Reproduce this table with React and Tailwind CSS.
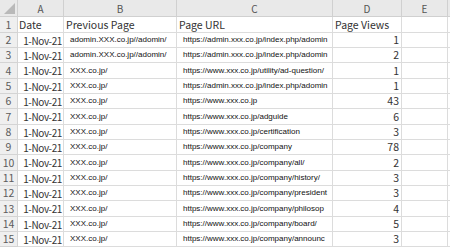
import React from 'react';

const ROWS = [
  ['Date', 'Previous Page', 'Page URL', 'Page Views', true],
  ['1-Nov-21', 'adomin.XXX.co.jp//adomin/', 'https://admin.xxx.co.jp/index.php/adomin', '1'],
  ['1-Nov-21', 'adomin.XXX.co.jp//adomin/', 'https://admin.xxx.co.jp/index.php/adomin', '2'],
  ['1-Nov-21', 'XXX.co.jp/', 'https://www.xxx.co.jp/utility/ad-question/', '1'],
  ['1-Nov-21', 'XXX.co.jp/', 'https://admin.xxx.co.jp/index.php/adomin', '1'],
  ['1-Nov-21', 'XXX.co.jp/', 'https://www.xxx.co.jp', '43'],
  ['1-Nov-21', 'XXX.co.jp/', 'https://www.xxx.co.jp/adguide', '6'],
  ['1-Nov-21', 'XXX.co.jp/', 'https://www.xxx.co.jp/certification', '3'],
  ['1-Nov-21', 'XXX.co.jp/', 'https://www.xxx.co.jp/company', '78'],
  ['1-Nov-21', 'XXX.co.jp/', 'https://www.xxx.co.jp/company/all/', '2'],
  ['1-Nov-21', 'XXX.co.jp/', 'https://www.xxx.co.jp/company/history/', '3'],
  ['1-Nov-21', 'XXX.co.jp/', 'https://www.xxx.co.jp/company/president', '3'],
  ['1-Nov-21', 'XXX.co.jp/', 'https://www.xxx.co.jp/company/philosop', '4'],
  ['1-Nov-21', 'XXX.co.jp/', 'https://www.xxx.co.jp/company/board/', '5'],
  ['1-Nov-21', 'XXX.co.jp/', 'https://www.xxx.co.jp/company/announc', '3'],
];

// rows alternate 15/16px so 15 rows land on the 246px line
const HEIGHTS = ['h-[15px]', 'h-[16px]', 'h-[15px]'];

const gothic = "font-['Noto_Sans_CJK_JP','Noto_Sans',sans-serif]";
const small = "font-['Liberation_Sans',Arial,sans-serif]";

function Row({ n, row }) {
  const [a, b, c, d, isHead] = row;
  const h = HEIGHTS[n % 3];
  return (
    <div className={`flex ${h} shrink-0 whitespace-nowrap`}>
      <div className={`w-[18px] shrink-0 flex items-center justify-center bg-[#efefef] border-r border-b border-[#d4d4d4] text-[10.5px] text-[#5c5c5c] ${gothic}`}>
        {n}
      </div>
      <div className={`w-[46px] shrink-0 flex items-center border-r border-b border-[#dcdcdc] text-[#333] ${gothic} ${isHead ? 'justify-start pl-[1px] text-[10.5px]' : 'justify-end pr-[1px] text-[10px] tracking-[-0.4px]'}`}>
        {a}
      </div>
      <div className={`w-[113px] shrink-0 flex items-center overflow-hidden border-r border-b border-[#dcdcdc] ${isHead ? `text-[10.5px] pl-[2px] text-[#333] ${gothic}` : `text-[8px] pl-[6px] text-[#111] ${small}`}`}>
        {b}
      </div>
      <div className={`w-[156px] shrink-0 flex items-center overflow-hidden border-r border-b border-[#dcdcdc] ${isHead ? `text-[10.5px] pl-[2px] text-[#333] ${gothic}` : `text-[8px] pl-[6px] text-[#111] ${small}`}`}>
        {c}
      </div>
      <div className={`w-[69px] shrink-0 flex items-center border-r border-b border-[#dcdcdc] text-[10.5px] text-[#333] ${gothic} ${isHead ? 'justify-start pl-[2px]' : 'justify-end pr-[2px]'}`}>
        {d}
      </div>
      <div className="w-[46px] shrink-0 border-r border-b border-[#dcdcdc]" />
      <div className="flex-1 border-b border-[#dcdcdc]" />
    </div>
  );
}

export default function App() {
  return (
    <div className="w-[450px] h-[249px] overflow-hidden bg-white flex flex-col">
      <div className={`flex h-[17px] shrink-0 bg-[#e9e9e9] text-[10px] text-[#555] ${gothic}`}>
        <div className="w-[18px] shrink-0 flex items-end justify-end border-r border-b border-[#d0d0d0] pr-[2px] pb-[2px]">
          <svg width="11" height="11" viewBox="0 0 11 11">
            <polygon points="11,0 11,11 0,11" fill="#b9b9b9" />
          </svg>
        </div>
        <div className="w-[46px] shrink-0 flex items-center justify-center border-r border-b border-[#d0d0d0]">A</div>
        <div className="w-[113px] shrink-0 flex items-center justify-center border-r border-b border-[#d0d0d0]">B</div>
        <div className="w-[156px] shrink-0 flex items-center justify-center border-r border-b border-[#d0d0d0]">C</div>
        <div className="w-[69px] shrink-0 flex items-center justify-center border-r border-b border-[#d0d0d0]">D</div>
        <div className="w-[46px] shrink-0 flex items-center justify-center border-r border-b border-[#d0d0d0]">E</div>
        <div className="flex-1 border-b border-[#d0d0d0]" />
      </div>
      {ROWS.map((row, i) => (
        <Row key={i} n={i + 1} row={row} />
      ))}
    </div>
  );
}
